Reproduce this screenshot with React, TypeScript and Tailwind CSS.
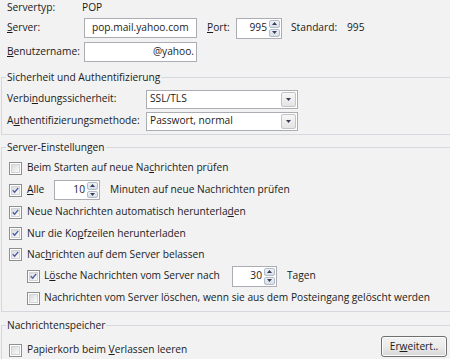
import React from "react";

const Check = ({ checked }: { checked?: boolean }) => (
  <span className="flex h-[13px] w-[13px] shrink-0 border border-[#8e8f8f] bg-white p-[1px]">
    <span className="flex h-full w-full items-center justify-center border border-[#d2d4d8] bg-gradient-to-br from-[#d7dade] to-[#fbfbfb]">
      {checked && (
        <svg width="9" height="9" viewBox="0 0 9 9">
          <path d="M1 4.2 L3.4 6.8 L8 1.2" fill="none" stroke="#4a5c9c" strokeWidth="1.7" />
        </svg>
      )}
    </span>
  </span>
);

const Tri = ({ up }: { up?: boolean }) => (
  <svg width="5" height="3" viewBox="0 0 5 3">
    <path d={up ? "M0 3 L2.5 0 L5 3Z" : "M0 0 L2.5 3 L5 0Z"} fill="#3c3c5a" />
  </svg>
);

const Spin = ({ value, w, h }: { value: string; w: string; h: string }) => (
  <div className={`flex ${w} ${h} shrink-0 border border-[#abadb3] bg-white`}>
    <div className="flex flex-1 items-center justify-end pr-[2px]">{value}</div>
    <div className="flex w-[12px] flex-col gap-[1px] p-[1px] pl-0">
      <div className="flex flex-1 items-center justify-center rounded-[2px] border border-[#b2bcc8] bg-gradient-to-b from-[#eef2f7] to-[#d7dfe9]">
        <Tri up />
      </div>
      <div className="flex flex-1 items-center justify-center rounded-[2px] border border-[#b2bcc8] bg-gradient-to-b from-[#eef2f7] to-[#d7dfe9]">
        <Tri />
      </div>
    </div>
  </div>
);

const Select = ({ value }: { value: string }) => (
  <div className="flex h-[19px] w-[152px] shrink-0 items-center border border-[#abadb3] bg-white pl-[3px] pr-[1px]">
    <span className="flex-1">{value}</span>
    <span className="flex h-[15px] w-[15px] items-center justify-center rounded-[2px] border border-[#c4c4c4] bg-gradient-to-b from-[#f7f7f7] to-[#e4e4e4]">
      <Tri />
    </span>
  </div>
);

const Row = ({ h, children, pl }: { h: string; children: React.ReactNode; pl: string }) => (
  <div className={`flex ${h} items-center ${pl}`}>{children}</div>
);

const Legend = ({ children }: { children: React.ReactNode }) => (
  <legend className="ml-[4px] px-[1px] leading-[14px]">{children}</legend>
);

export default function App() {
  return (
    <div
      className="h-[359px] w-[450px] overflow-hidden bg-[#f2f2f2] text-[10.2px] text-[#1b1b1b]"
      style={{ fontFamily: '"Open Sans", "Noto Sans", sans-serif' }}
    >
      <div className="flex h-[16px] items-center pl-[7px]">
        <span className="w-[75px]">Servertyp:</span>
        <span>POP</span>
      </div>
      <div className="mt-[1px] flex h-[22px] items-center pl-[7px]">
        <span className="w-[77px]">
          <u>S</u>erver:
        </span>
        <div className="flex h-[20px] w-[113px] items-center border border-[#abadb3] bg-white pl-[7px]">
          pop.mail.yahoo.com
        </div>
        <span className="ml-[10px] w-[29px]">
          <u>P</u>ort:
        </span>
        <Spin value="995" w="w-[46px]" h="h-[21px]" />
        <span className="ml-[9px] w-[56px]">Standard:</span>
        <span>995</span>
      </div>
      <div className="mt-[1px] flex h-[23px] items-center pl-[7px]">
        <span className="w-[77px]">
          <u>B</u>enutzername:
        </span>
        <div className="flex h-[20px] w-[113px] items-center justify-end border border-[#abadb3] bg-white pr-[2px]">
          @yahoo.
        </div>
      </div>

      <fieldset className="mt-[7px] ml-[1px] w-[460px] border border-[#d5d8dc] p-0 pt-[4px] pb-[2px]">
        <Legend>Sicherheit und Authentifizierung</Legend>
        <Row h="h-[22px]" pl="pl-[5px]">
          <span className="w-[139px]">
            Verbi<u>n</u>dungssicherheit:
          </span>
          <Select value="SSL/TLS" />
        </Row>
        <Row h="h-[22px]" pl="pl-[5px]">
          <span className="w-[139px]">
            A<u>u</u>thentifizierungsmethode:
          </span>
          <Select value="Passwort, normal" />
        </Row>
      </fieldset>

      <fieldset className="mt-[5px] ml-[1px] w-[460px] border border-[#d5d8dc] p-0 pt-[3px] pb-[2px]">
        <Legend>Server-Einstellungen</Legend>
        <Row h="h-[22px]" pl="pl-[7px]">
          <Check />
          <span className="ml-[5px]">
            Beim Starten auf neue Na<u>c</u>hrichten prüfen
          </span>
        </Row>
        <Row h="h-[22px]" pl="pl-[7px]">
          <Check checked />
          <span className="ml-[5px] w-[27px]">
            <u>A</u>lle
          </span>
          <Spin value="10" w="w-[46px]" h="h-[20px]" />
          <span className="ml-[10px]">Minuten auf neue Nachrichten prüfen</span>
        </Row>
        <Row h="h-[22px]" pl="pl-[7px]">
          <Check checked />
          <span className="ml-[5px]">
            Neue Nachrichten automatisch herunterla<u>d</u>en
          </span>
        </Row>
        <Row h="h-[21px]" pl="pl-[7px]">
          <Check checked />
          <span className="ml-[5px]">
            Nur die Ko<u>p</u>fzeilen herunterladen
          </span>
        </Row>
        <Row h="h-[21px]" pl="pl-[7px]">
          <Check checked />
          <span className="ml-[5px]">
            Nac<u>h</u>richten auf dem Server belassen
          </span>
        </Row>
        <Row h="h-[22px]" pl="pl-[25px]">
          <Check checked />
          <span className="ml-[4px] w-[188px]">
            L<u>ö</u>sche Nachrichten vom Server nach
          </span>
          <Spin value="30" w="w-[45px]" h="h-[21px]" />
          <span className="ml-[10px]">Tagen</span>
        </Row>
        <Row h="h-[22px]" pl="pl-[25px]">
          <Check />
          <span className="ml-[4px]">
            Nachrichten vom Server löschen, wenn sie aus dem Postein<u>g</u>ang gelöscht werden
          </span>
        </Row>
      </fieldset>

      <fieldset className="mt-[6px] ml-[1px] w-[460px] border border-[#d5d8dc] p-0 pt-[4px]">
        <Legend>Nachrichtenspeicher</Legend>
        <div className="flex items-start justify-between pl-[7px] pr-[13px]">
          <div className="mt-[4px] flex h-[20px] items-center">
            <Check />
            <span className="ml-[5px]">
              Papierkorb beim <u>V</u>erlassen leeren
            </span>
          </div>
          <button className="flex h-[21px] w-[66px] items-center justify-center rounded-[3px] border border-[#707070] bg-gradient-to-b from-[#f2f2f2] via-[#ebebeb] to-[#d6d6d6] shadow-[inset_0_0_0_1px_#fcfcfc]">
            Er<u>w</u>eitert..
          </button>
        </div>
      </fieldset>
    </div>
  );
}
